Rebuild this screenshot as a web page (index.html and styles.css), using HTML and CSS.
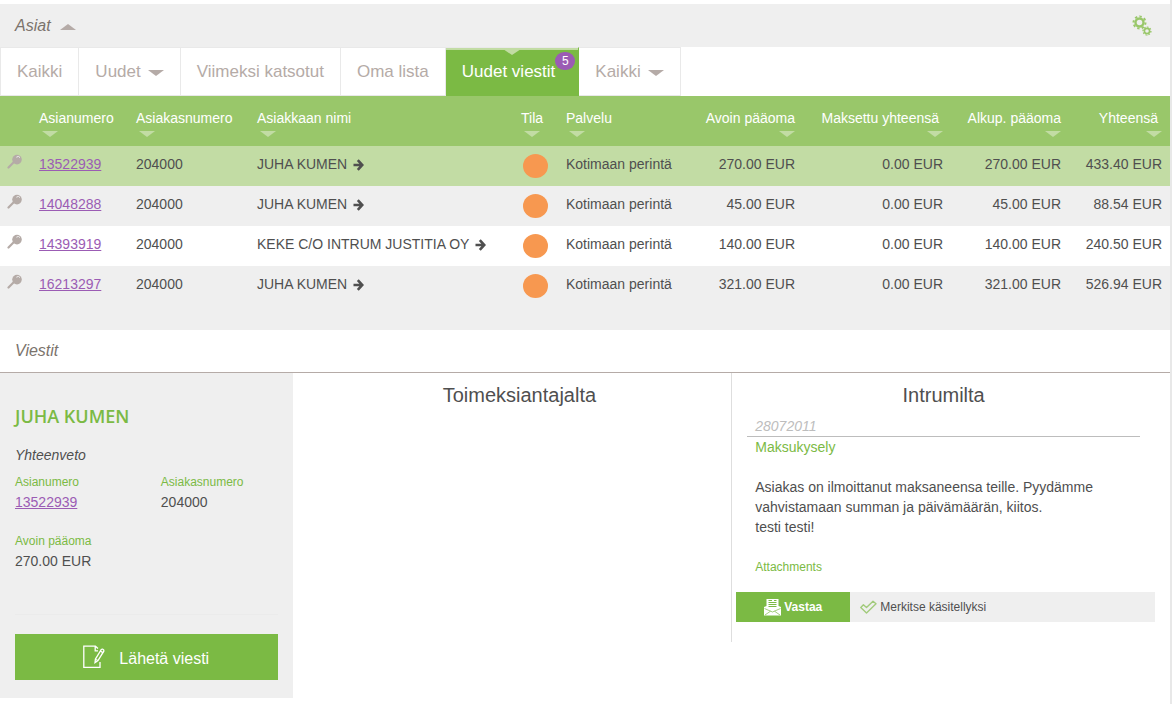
FILE: index.html
```
<!DOCTYPE html>
<html lang="fi">
<head>
<meta charset="utf-8">
<title>Asiat</title>
<link rel="stylesheet" href="styles.css">
</head>
<body>
<svg class="sprite" aria-hidden="true">
  <symbol id="down" viewBox="0 0 16 6"><path d="M0 0H16L8 6Z"/></symbol>
  <symbol id="up" viewBox="0 0 16 6"><path d="M0 6H16L8 0Z"/></symbol>
  <symbol id="key" viewBox="0 0 16 16">
    <path d="M7.2 7.8 1.5 13.5" fill="none" stroke="#b5aba7" stroke-width="2.2" stroke-linecap="round"/>
    <circle cx="10" cy="5.6" r="4.8" fill="#b5aba7"/>
    <path d="M9.4 3.2Q11.6 1.4 13 3.6" fill="none" stroke="#efefef" stroke-width="1"/>
  </symbol>
  <symbol id="arrow" viewBox="0 0 11 12">
    <path d="M0.5 6H8.5M4.8 1.2 9.3 6 4.8 10.8" fill="none" stroke="#4f4f4f" stroke-width="2.6"/>
  </symbol>
</svg>
<main class="page">
  <header class="bar">
    <button class="bar-title" type="button">Asiat <svg class="caret"><use href="#up"/></svg></button>
    <button class="settings" type="button" aria-label="Asetukset">
      <svg width="20" height="21" viewBox="0 0 20 21" fill="none" stroke="#99c76a">
        <circle cx="7.5" cy="7.5" r="4" stroke-width="2.4"/>
        <circle cx="7.5" cy="7.5" r="6" stroke-width="2" pathLength="16" stroke-dasharray="1 1"/>
        <circle cx="15" cy="16" r="2.6" stroke-width="1.6"/>
        <circle cx="15" cy="16" r="3.9" stroke-width="1.4" pathLength="16" stroke-dasharray="1 1"/>
      </svg>
    </button>
  </header>
  <nav class="tabs">
    <button class="tab" type="button">Kaikki</button>
    <button class="tab" type="button">Uudet <svg class="caret"><use href="#down"/></svg></button>
    <button class="tab" type="button">Viimeksi katsotut</button>
    <button class="tab" type="button">Oma lista</button>
    <button class="tab tab-active" type="button">Uudet viestit<span class="badge">5</span></button>
    <button class="tab" type="button">Kaikki <svg class="caret"><use href="#down"/></svg></button>
  </nav>
  <section class="cases">
    <table>
      <colgroup>
        <col class="c-key"><col class="c-case"><col class="c-client"><col><col class="c-state"><col class="c-service"><col class="c-open"><col class="c-paid"><col class="c-orig"><col class="c-total">
      </colgroup>
      <thead>
        <tr>
          <td></td>
          <th><button class="sort" type="button">Asianumero<svg class="caret"><use href="#down"/></svg></button></th>
          <th><button class="sort" type="button">Asiakasnumero<svg class="caret"><use href="#down"/></svg></button></th>
          <th><button class="sort" type="button">Asiakkaan nimi<svg class="caret"><use href="#down"/></svg></button></th>
          <th><button class="sort" type="button">Tila<svg class="caret"><use href="#down"/></svg></button></th>
          <th><button class="sort" type="button">Palvelu<svg class="caret"><use href="#down"/></svg></button></th>
          <th><button class="sort sort-num" type="button">Avoin pääoma<svg class="caret"><use href="#down"/></svg></button></th>
          <th><button class="sort sort-num" type="button"><span class="inset">Maksettu yhteensä</span><svg class="caret"><use href="#down"/></svg></button></th>
          <th><button class="sort sort-num" type="button">Alkup. pääoma<svg class="caret"><use href="#down"/></svg></button></th>
          <th><button class="sort sort-num" type="button"><span class="inset">Yhteensä</span><svg class="caret"><use href="#down"/></svg></button></th>
        </tr>
      </thead>
      <tbody>
        <tr class="selected">
          <td class="key"><svg><use href="#key"/></svg></td><td><a href="#">13522939</a></td><td>204000</td>
          <td>JUHA KUMEN <svg class="go"><use href="#arrow"/></svg></td><td class="state"><span class="dot"></span></td><td>Kotimaan perintä</td>
          <td class="num">270.00 EUR</td><td class="num">0.00 EUR</td><td class="num">270.00 EUR</td><td class="num">433.40 EUR</td>
        </tr>
        <tr>
          <td class="key"><svg><use href="#key"/></svg></td><td><a href="#">14048288</a></td><td>204000</td>
          <td>JUHA KUMEN <svg class="go"><use href="#arrow"/></svg></td><td class="state"><span class="dot"></span></td><td>Kotimaan perintä</td>
          <td class="num">45.00 EUR</td><td class="num">0.00 EUR</td><td class="num">45.00 EUR</td><td class="num">88.54 EUR</td>
        </tr>
        <tr class="odd">
          <td class="key"><svg><use href="#key"/></svg></td><td><a href="#">14393919</a></td><td>204000</td>
          <td>KEKE C/O INTRUM JUSTITIA OY <svg class="go"><use href="#arrow"/></svg></td><td class="state"><span class="dot"></span></td><td>Kotimaan perintä</td>
          <td class="num">140.00 EUR</td><td class="num">0.00 EUR</td><td class="num">140.00 EUR</td><td class="num">240.50 EUR</td>
        </tr>
        <tr>
          <td class="key"><svg><use href="#key"/></svg></td><td><a href="#">16213297</a></td><td>204000</td>
          <td>JUHA KUMEN <svg class="go"><use href="#arrow"/></svg></td><td class="state"><span class="dot"></span></td><td>Kotimaan perintä</td>
          <td class="num">321.00 EUR</td><td class="num">0.00 EUR</td><td class="num">321.00 EUR</td><td class="num">526.94 EUR</td>
        </tr>
      </tbody>
    </table>
  </section>
  <h2 class="section-title">Viestit</h2>
  <div class="messages">
    <aside class="summary">
      <h3 class="person">JUHA KUMEN</h3>
      <p class="subtitle">Yhteenveto</p>
      <dl class="facts">
        <div><dt>Asianumero</dt><dd><a href="#">13522939</a></dd></div>
        <div><dt>Asiakasnumero</dt><dd>204000</dd></div>
        <div><dt>Avoin pääoma</dt><dd>270.00 EUR</dd></div>
      </dl>
      <button class="send" type="button">
        <svg width="22" height="24" viewBox="0 0 22 24" fill="none" stroke="#fff" stroke-width="1.3">
          <path d="M17 17V22.4H0.8V1.2H12.4L15 3.6M12.2 1.4V5.8H15"/>
          <path d="M12.4 14.2 18.2 4.6Q19.6 3.4 20.8 5.2L20.8 6.2 15 15.6 12 17.6ZM17.4 6 19.8 7.6M12.4 14.2 15 15.6"/>
        </svg>
        <span>Lähetä viesti</span>
      </button>
    </aside>
    <section class="column">
      <h3>Toimeksiantajalta</h3>
    </section>
    <section class="column column-in">
      <h3>Intrumilta</h3>
      <article class="message">
        <time>28072011</time>
        <h4>Maksukysely</h4>
        <p>Asiakas on ilmoittanut maksaneensa teille. Pyydämme vahvistamaan summan ja päivämäärän, kiitos.<br>testi testi!</p>
        <h5>Attachments</h5>
      </article>
      <div class="actions">
        <button class="reply" type="button">
          <svg width="17" height="17" viewBox="0 0 17 17">
            <path d="M2.5 0H14.5V7L17 8V16.5H0V8L2.5 7Z" fill="#fff"/>
            <path d="M4.5 1.5H8M10 1.5H12.5M4.5 3.5H12.5M4.5 5.5H12.5M4.5 7.5H12.5" stroke="#7bba44" stroke-width="1"/>
            <path d="M0.5 9.5 8.5 13 16.5 9.5M1 16 6.5 12.2M16 16 10.5 12.2" fill="none" stroke="#7bba44" stroke-width=".7"/>
          </svg>Vastaa
        </button>
        <button class="mark" type="button">
          <svg width="17" height="14" viewBox="0 0 17 14"><path d="M.8 7.4 3.4 4.8 6.5 7.6 13 1.2 16 3.8 6.5 13Z" fill="none" stroke="#a2cb7c" stroke-width="1.4" stroke-linejoin="round"/></svg>Merkitse käsitellyksi
        </button>
      </div>
    </section>
  </div>
</main>
</body>
</html>
```
FILE: styles.css
```
* { box-sizing: border-box; }
body {
  margin: 0;
  background: #fff;
  color: #4f4f4f;
  font: 14px/20px "Liberation Sans", Arial, sans-serif;
}
h2, h3, h4, h5, p, dl, dd { margin: 0; font-weight: normal; }
button { border: 0; padding: 0; margin: 0; background: none; font: inherit; color: inherit; cursor: pointer; }
a { color: #9b5cb4; text-decoration: underline; }
svg { display: block; }
.sprite { position: absolute; width: 0; height: 0; }
.caret { width: 16px; height: 6px; fill: #b5aba7; }
.page { min-height: 100vh; padding-top: 4px; border-right: 2px solid #e8e8e8; }

.bar {
  display: flex;
  align-items: center;
  justify-content: space-between;
  height: 43px;
  padding: 0 18px 0 15px;
  background: #efefef;
}
.bar-title { display: flex; align-items: center; gap: 9px; font-size: 16px; font-style: italic; color: #7b736c; }
.bar-title .caret { margin-top: 3px; }

.tabs { display: flex; height: 49px; }
.tab {
  display: flex;
  align-items: center;
  gap: 7px;
  padding: 0 16px;
  border: 1px solid #e9e9e9;
  border-left: 0;
  font-size: 17px;
  color: #b5aba7;
}
.tab:first-child { border-left: 1px solid #e9e9e9; }
.tab .caret { margin-top: 3px; }
.tab-active {
  position: relative;
  padding-right: 23px;
  border-color: #e9e9e9 #7bba44 #7bba44;
  background: linear-gradient(#c2dca4 2px, #7bba44 2px);
  color: #fff;
}
.tab-active::before {
  content: "";
  position: absolute;
  top: 1px;
  left: 50%;
  margin-left: -9px;
  border: 9px solid transparent;
  border-top: 6px solid #c2dca4;
  border-bottom: 0;
}
.badge {
  position: absolute;
  top: 4px;
  right: 3px;
  width: 20px;
  border-radius: 9px;
  background: #9b5cb4;
  font-size: 12px;
  line-height: 18px;
  text-align: center;
}

.cases { padding-bottom: 24px; background: #efefef; }
table { width: 100%; border-collapse: collapse; table-layout: fixed; }
.c-key { width: 31px; }
.c-case { width: 97px; }
.c-client { width: 121px; }
.c-state { width: 45px; }
.c-service { width: 132px; }
.c-open { width: 113px; }
.c-paid { width: 148px; }
.c-orig { width: 118px; }
.c-total { width: 101px; }
th, td { padding: 0 8px; text-align: left; white-space: nowrap; }
thead tr { height: 50px; background: #99c76a; }
th { padding-top: 12px; vertical-align: top; font-weight: normal; color: #fff; }
.sort { display: flex; flex-direction: column; gap: 3px; width: 100%; align-items: flex-start; }
.sort .caret { fill: #c2dca4; margin-left: 3px; }
.sort-num { align-items: flex-end; }
.inset { padding-right: 4px; }
tbody td { height: 40px; padding-top: 8px; vertical-align: top; }
.selected { background: #c2dca4; }
.odd { background: #fff; }
.key svg { width: 16px; height: 16px; }
.key { padding-left: 7px; }
.num { text-align: right; }
.go { display: inline-block; width: 11px; height: 12px; margin-left: 2px; vertical-align: -2px; }
.state { padding-left: 10px; }
.dot { display: block; width: 25px; height: 24px; border-radius: 50%; background: #f79850; }

.section-title {
  padding: 11px 15px;
  border-bottom: 1px solid #b5aba7;
  font-size: 16px;
  font-style: italic;
  color: #7b736c;
}
.messages { display: grid; grid-template-columns: 2fr 3fr 3fr; align-items: start; }
.summary { padding: 28px 15px 18px; background: #efefef; }
.person { font: 600 18px/30px "Open Sans", sans-serif; color: #7bba44; }
.subtitle { margin: 14px 0 7px; font-style: italic; }
.facts { display: grid; grid-template-columns: 5fr 4fr; row-gap: 19px; padding-bottom: 43px; border-bottom: 1px solid #ebebeb; }
dt, h5 { font-size: 12px; color: #7bba44; }
.send {
  display: flex;
  align-items: center;
  justify-content: center;
  gap: 14px;
  width: 100%;
  margin-top: 19px;
  padding: 11px 0;
  background: #7bba44;
  color: #fff;
  font-size: 16px;
}
.send span { padding-top: 3px; }
.column { padding: 10px 0 20px 15px; }
.column h3 { font-size: 20px; line-height: 24px; text-align: center; }
.column-in { padding: 10px 15px 20px 0; border-left: 1px solid #dedede; }
.message { padding: 9px 15px 15px; }
time { display: block; padding-left: 8px; border-bottom: 1px solid #bdbdbd; font-style: italic; color: #bdbdbd; }
h4 { padding-left: 8px; font-size: 14px; color: #7bba44; }
.message p { padding: 20px 8px; }
h5 { padding-left: 8px; }
.actions { display: flex; margin-left: 4px; background: #efefef; font-size: 12px; }
.actions button { display: flex; align-items: center; gap: 3px; height: 30px; }
.reply { justify-content: center; width: 114px; background: #7bba44; color: #fff; font-weight: bold; }
.mark { padding-left: 10px; }
```
